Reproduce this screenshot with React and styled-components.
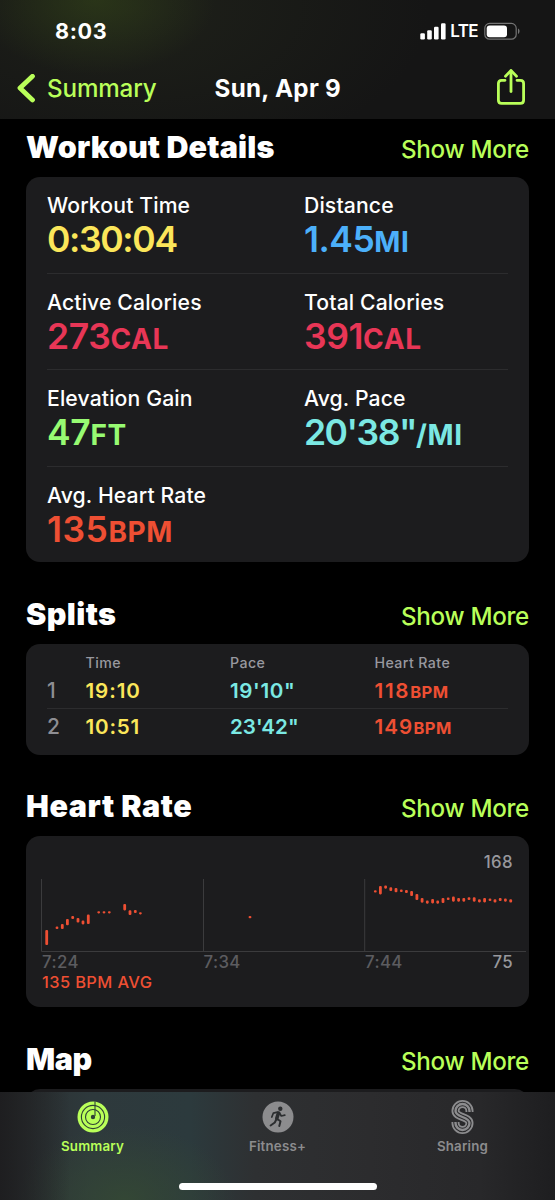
import React from 'react';
import styled, { createGlobalStyle } from 'styled-components';

const LIME = '#b9ff59';
const YELLOW = '#fbe65a';
const BLUE = '#4cb0fa';
const PINK = '#e83656';
const GREEN = '#97fa72';
const CYAN = '#7be8e3';
const ORANGE = '#ee4f33';

const METRICS = [
 [
  { label: 'Workout Time', value: '0:30:04', unit: '', color: YELLOW, gap: -1.35 },
  { label: 'Distance', value: '1.45', unit: 'MI', color: BLUE, gap: -0.5 },
 ],
 [
  { label: 'Active Calories', value: '273', unit: 'CAL', color: PINK, gap: -0.4 },
  { label: 'Total Calories', value: '391', unit: 'CAL', color: PINK, gap: -0.4 },
 ],
 [
  { label: 'Elevation Gain', value: '47', unit: 'FT', color: GREEN, gap: -0.3 },
  { label: 'Avg. Pace', value: `20'38"`, unit: '/MI', color: CYAN, gap: -1.5 },
 ],
 [
  { label: 'Avg. Heart Rate', value: '135', unit: 'BPM', color: ORANGE, gap: 0.5 },
 ],
];

const SPLITS = [
 { no: 1, time: '19:10', pace: `19'10"`, bpm: 118, gaps: [0.9, 0.6, 1.7] },
 { no: 2, time: '10:51', pace: `23'42"`, bpm: 149, gaps: [0.8, 0, 1.1] },
];

// [x, top, bottom] of every heart rate range in the chart
const BEATS = [
 [46.7, 930, 945], [57, 926.6, 929], [62.3, 924, 929], [67.4, 919, 925.3],
 [72.7, 916, 919], [78, 918, 922.6], [83, 920.6, 924.4], [88.3, 914.6, 924],
 [98.7, 911.3, 913.4], [104, 911.3, 913.4], [109.3, 911.3, 913.4],
 [124.7, 904, 910.4], [130, 910.3, 915], [135.3, 910, 913], [140.4, 912.2, 914.4],
 [250, 916, 918.3],
 [375.3, 890.3, 892.6], [380.4, 886, 894.4], [385.6, 885.6, 888.7], [390.8, 887.3, 891],
 [396, 888, 892.3], [401.3, 889.6, 892], [406.4, 890, 893], [411.6, 891, 896],
 [416.9, 894, 900], [422.1, 898, 902.7], [427.3, 900.6, 903.7], [432.6, 899, 903.4],
 [437.7, 900.6, 903.7], [443, 898, 903], [448.2, 897.6, 900], [453.4, 896.6, 901.7],
 [458.6, 898, 901.7], [463.8, 898, 901.7], [469, 897.3, 900], [474.2, 897.3, 901.7],
 [479.4, 899.3, 902.4], [484.6, 898, 902.4], [490, 898.6, 901], [495, 899.3, 902.6],
 [500.2, 898, 901], [505.4, 898.6, 901.7], [510.7, 899.3, 902.6],
];

const StatusIcons = () => (
 <StatusGroup>
  <svg width='27' height='18' viewBox='0 0 27 18' fill='#fff'>
   <rect x='0.3' y='11.3' width='4.6' height='6.2' rx='1.2' />
   <rect x='7.2' y='8.3' width='4.6' height='9.2' rx='1.2' />
   <rect x='14' y='4.8' width='4.6' height='12.7' rx='1.2' />
   <rect x='21' y='1.2' width='4.6' height='16.3' rx='1.2' />
  </svg>
  <Carrier>LTE</Carrier>
  <svg width='37' height='18' viewBox='0 0 37 18'>
   <rect x='0.8' y='1.4' width='31.4' height='15.8' rx='4.8' fill='none' stroke='#747474' strokeWidth='1.2' />
   <rect x='2.7' y='3.4' width='20.3' height='11.8' rx='3' fill='#fff' />
   <path d='M34 6.6c2 .8 2 4.6 0 5.4z' fill='#747474' />
  </svg>
 </StatusGroup>
);

const ShareIcon = () => (
 <svg width='30' height='38' viewBox='0 0 30 38' fill='none' stroke={LIME} strokeWidth='2.8' strokeLinecap='round' strokeLinejoin='round'>
  <path d='M9 12.3H5.5C3.4 12.3 2.4 13.5 2.4 15.5V32.2C2.4 34.3 3.5 35.4 5.6 35.4H24.4C26.5 35.4 27.6 34.3 27.6 32.2V15.5C27.6 13.5 26.6 12.3 24.5 12.3H21' />
  <path d='M15 23.5V3' />
  <path d='M9.5 8.2L15 2.6L20.5 8.2' />
 </svg>
);

const RingsIcon = () => (
 <svg width='32' height='32' viewBox='0 0 32 32'>
  <circle cx='16' cy='16' r='15.5' fill={LIME} />
  <g fill='none' stroke='#2f4036' strokeWidth='1.1'>
   <circle cx='16' cy='16' r='11.6' />
   <circle cx='16' cy='16' r='7.5' />
   <path d='M18 .6V15' />
  </g>
  <circle cx='16' cy='16' r='2.2' fill='#2f4036' />
 </svg>
);

const RunnerIcon = () => (
 <svg width='32' height='32' viewBox='0 0 32 32'>
  <circle cx='16' cy='16' r='15.5' fill='#8c8c8e' />
  <circle cx='18.3' cy='7.8' r='2.2' fill='#2c2e30' />
  <g fill='none' stroke='#2c2e30' strokeLinecap='round' strokeLinejoin='round'>
   <path d='M16.5 12L14.8 17.3' strokeWidth='3.6' />
   <path d='M15.5 11.2L11.3 12.2L9.8 16M17.5 12L19.3 15L22.8 14.2' strokeWidth='1.7' />
   <path d='M14.5 18L12.8 21.5L8.6 24.5M15.3 18L18.5 20.2L17.3 25' strokeWidth='2' />
  </g>
 </svg>
);

const S_CURVE = 'M19.5 13V12A7 7 0 0 0 5.5 12C5.5 18.5 19.5 17.5 19.5 24A7 7 0 0 1 5.5 24V23';

const SharingIcon = () => (
 <svg width='25' height='36' viewBox='0 0 25 36' fill='none'>
  <path d={S_CURVE} stroke='#8c8c8e' strokeWidth='8' />
  <path d={S_CURVE} stroke='#2a2a2c' strokeWidth='4.4' />
  <path d={S_CURVE} stroke='#8c8c8e' strokeWidth='2.4' />
 </svg>
);

const HeartChart = () => (
 <svg width='503' height='171' viewBox='26 836 503 171'>
  <path d='M41.5 879V951.5M203.5 879V951.5M364.7 879V951.5M41.5 951.5H526' stroke='#3b3b3d' strokeWidth='1' fill='none' />
  {BEATS.map(([x, top, bottom]) => (
   <rect key={x} x={x - 1.4} y={top} width='2.8' height={bottom - top} rx='1.1' fill={ORANGE} />
  ))}
 </svg>
);

const SectionHead = ({ title, gap, first }) => (
 <HeadRow $first={first}>
  <Title $gap={gap}>{title}</Title>
  <More>Show More</More>
 </HeadRow>
);

const App = () => {

 return (
  <Phone>
   <GlobalStyle />
   <Header>
    <StatusBar>
     <Clock>8:03</Clock>
     <StatusIcons />
    </StatusBar>
    <NavBar>
     <Back>
      <svg width='20' height='30' viewBox='0 0 20 30' fill='none' stroke={LIME} strokeWidth='4.8' strokeLinecap='round' strokeLinejoin='round'>
       <path d='M16.5 2.3L4 14.1L16.5 25.9' />
      </svg>
      Summary
     </Back>
     <NavTitle>Sun, Apr 9</NavTitle>
     <ShareButton><ShareIcon /></ShareButton>
    </NavBar>
   </Header>

   <Content>
    <SectionHead title='Workout Details' gap={0.15} first />
    <MetricCard>
     {METRICS.map((row) => (
      <MetricRow key={row[0].label}>
       {row.map((m) => (
        <div key={m.label}>
         <MetricLabel>{m.label}</MetricLabel>
         <MetricValue $color={m.color} $gap={m.gap}>{m.value}<Unit>{m.unit}</Unit></MetricValue>
        </div>
       ))}
      </MetricRow>
     ))}
    </MetricCard>

    <SectionHead title='Splits' gap={0.4} />
    <SplitCard>
     <SplitHead>
      <span />
      <span>Time</span>
      <span>Pace</span>
      <span>Heart Rate</span>
     </SplitHead>
     {SPLITS.map((s) => (
      <SplitRow key={s.no}>
       <SplitNo>{s.no}</SplitNo>
       <SplitValue $color={YELLOW} $gap={s.gaps[0]}>{s.time}</SplitValue>
       <SplitValue $color={CYAN} $gap={s.gaps[1]}>{s.pace}</SplitValue>
       <SplitValue $color={ORANGE} $gap={s.gaps[2]}>{s.bpm}<SmallUnit>BPM</SmallUnit></SplitValue>
      </SplitRow>
     ))}
    </SplitCard>

    <SectionHead title='Heart Rate' gap={0.55} />
    <ChartCard>
     <HeartChart />
     <ChartText>
      <MaxValue>168</MaxValue>
      <Axis>
       <span>7:24</span>
       <span>7:34</span>
       <span>7:44</span>
       <MinValue>75</MinValue>
      </Axis>
      <Average>135 BPM AVG</Average>
     </ChartText>
    </ChartCard>

    <SectionHead title='Map' gap={-0.4} />
    <MapCard />
   </Content>

   <TabBar>
    <Tab $active><RingsIcon />Summary</Tab>
    <Tab><RunnerIcon />Fitness+</Tab>
    <Tab><SharingIcon />Sharing</Tab>
    <HomeIndicator />
   </TabBar>
  </Phone>
 )

}

export default App;

const GlobalStyle = createGlobalStyle`
 * {
  box-sizing: border-box;
 }

 body {
  margin: 0;
  background: #000;
 }
`
const Phone = styled.div`
 width: 555px;
 height: 1200px;
 display: flex;
 flex-direction: column;
 overflow: hidden;
 background: #000;
 color: #fff;
 font-family: Inter, 'Liberation Sans', sans-serif;
`
const Header = styled.div`
 flex: none;
 height: 119px;
 background:
  radial-gradient(ellipse 120px 75px at 95px 0, rgba(52, 70, 24, .55), transparent),
  radial-gradient(ellipse 300px 160px at 130px 10px, rgba(36, 40, 28, .6), transparent),
  #151515;
`
const StatusBar = styled.div`
 height: 62px;
 padding: 0 34.5px 0 55px;
 display: flex;
 justify-content: space-between;
 align-items: center;
`
const Clock = styled.div`
 font-size: 21.6px;
 font-weight: 700;
 letter-spacing: .6px;
`
const StatusGroup = styled.div`
 display: flex;
 align-items: center;
`
const Carrier = styled.div`
 margin: 0 5.5px 0 3.5px;
 font-size: 17px;
 font-weight: 600;
 line-height: 22px;
 letter-spacing: -.6px;
`
const NavBar = styled.div`
 height: 54px;
 padding: 0 29px 0 16px;
 display: grid;
 grid-template-columns: 198.5px 1fr 30px;
 align-items: center;
`
const Back = styled.div`
 display: flex;
 align-items: center;
 gap: 11px;
 color: ${LIME};
 font-size: 24.2px;
 font-weight: 500;
 line-height: 30px;
 letter-spacing: -.15px;
`
const NavTitle = styled.div`
 font-size: 24.2px;
 font-weight: 700;
 line-height: 30px;
 letter-spacing: .3px;
`
const ShareButton = styled.div`
 display: flex;
 margin-top: -4px;
`
const Content = styled.div`
 flex: 1;
 min-height: 0;
 overflow: hidden;
 padding: 0 26px;
 display: flex;
 flex-direction: column;
`
const HeadRow = styled.div`
 flex: none;
 height: ${(props) => props.$first ? 58 : 81.5}px;
 padding-top: ${(props) => props.$first ? 0 : 23.5}px;
 display: flex;
 justify-content: space-between;
 align-items: baseline;
 line-height: 56px;
`
const Title = styled.h2`
 margin: 0;
 font-size: 30.5px;
 font-weight: 900;
 letter-spacing: ${(props) => props.$gap}px;
`
const More = styled.div`
 color: ${LIME};
 font-size: 24.2px;
 font-weight: 500;
 letter-spacing: -.3px;
`
const Card = styled.div`
 flex: none;
 border-radius: 14px;
 background: #1c1c1e;
`
const MetricCard = styled(Card)`
 height: 385px;
 padding: 0 21px;
`
const MetricRow = styled.div`
 height: 96.2px;
 padding-top: 13px;
 display: grid;
 grid-template-columns: 257px 1fr;
 align-content: start;

 & + & {
  border-top: 1px solid #2c2c2e;
 }
`
const MetricLabel = styled.div`
 font-size: 21.2px;
 font-weight: 500;
 line-height: 30px;
 letter-spacing: .12px;
`
const MetricValue = styled.div`
 color: ${(props) => props.$color};
 font-size: 35.5px;
 font-weight: 600;
 line-height: 40px;
 letter-spacing: ${(props) => props.$gap}px;
`
const Unit = styled.span`
 font-size: 28px;
 font-weight: 700;
 letter-spacing: .6px;
`
const SplitCard = styled(Card)`
 height: 111px;
 padding: 8px 21px 0;
`
const SplitGrid = styled.div`
 display: grid;
 grid-template-columns: 38.5px 144.5px 144.5px 1fr;
`
const SplitHead = styled(SplitGrid)`
 color: #98989f;
 font-size: 14.2px;
 font-weight: 500;
 line-height: 22px;
 letter-spacing: .4px;
`
const SplitRow = styled(SplitGrid)`
 height: 34px;
 line-height: 34px;
 font-size: 20.6px;

 & + & {
  border-top: 1px solid #2c2c2e;
  line-height: 36px;
 }
`
const SplitNo = styled.div`
 color: #8e8e93;
 font-size: 21px;
 font-weight: 500;
`
const SplitValue = styled.div`
 color: ${(props) => props.$color};
 font-weight: 600;
 letter-spacing: ${(props) => props.$gap}px;
`
const SmallUnit = styled.span`
 font-size: 16.5px;
 font-weight: 700;
 letter-spacing: .5px;
`
const ChartCard = styled(Card)`
 height: 171px;
 display: grid;

 & > * {
  grid-area: 1 / 1;
 }
`
const ChartText = styled.div`
 padding: 16px 16px 0;
 display: flex;
 flex-direction: column;
 font-size: 16.8px;
 line-height: 20px;
 letter-spacing: .4px;
`
const MaxValue = styled.div`
 align-self: flex-end;
 color: #98989d;
 font-weight: 500;
`
const Axis = styled.div`
 margin-top: 80px;
 display: grid;
 grid-template-columns: 161.5px 161.5px 1fr auto;
 color: #5c5c60;
 font-weight: 500;
`
const MinValue = styled.span`
 color: #98989d;
`
const Average = styled.div`
 color: ${ORANGE};
 font-size: 16.4px;
 font-weight: 500;
 letter-spacing: .4px;
`
const MapCard = styled(Card)`
 height: 200px;
`
const TabBar = styled.div`
 position: relative;
 flex: none;
 height: 108px;
 padding-top: 7px;
 display: grid;
 grid-template-columns: repeat(3, 1fr);
 background:
  linear-gradient(90deg, #1e1e20 0, transparent 70px),
  radial-gradient(ellipse 110px 75px at 125px 108px, rgba(52, 72, 52, .9), transparent),
  linear-gradient(90deg, #2a2d2e 0, #2e393c 90px, #2c3a3d 190px, #2e3032 255px, #2c2c2e 370px, #28282a 480px, #1e1e20 555px);
`
const Tab = styled.div`
 display: flex;
 flex-direction: column;
 align-items: center;
 color: ${(props) => props.$active ? LIME : '#8c8c8e'};
 font-size: 13.3px;
 font-weight: 600;
 line-height: 20px;
 letter-spacing: .2px;

 svg {
  height: 36px;
  margin-bottom: 1px;
 }
`
const HomeIndicator = styled.div`
 position: absolute;
 left: 179px;
 bottom: 10px;
 width: 198px;
 height: 7px;
 border-radius: 4px;
 background: #fff;
`
